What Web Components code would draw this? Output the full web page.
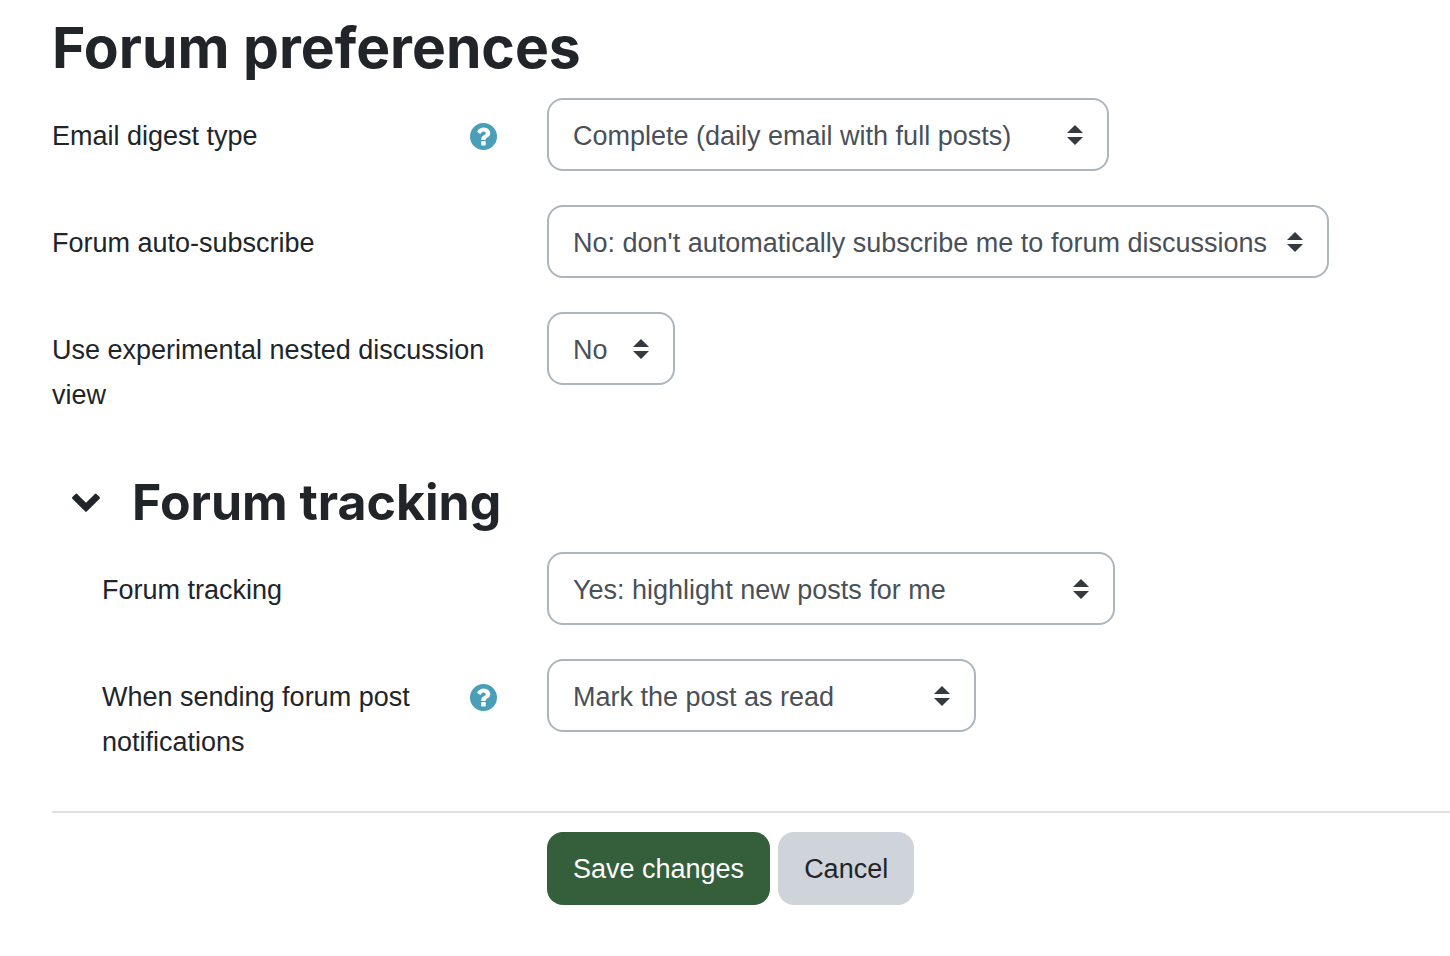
<!DOCTYPE html>
<html lang="en">
<head>
<meta charset="utf-8">
<meta name="viewport" content="width=device-width, initial-scale=1">
<title>Forum preferences</title>
<style>
    body {
        margin: 0;
        background: #fff;
        color: #212529;
        font: 27px/45px "Liberation Sans", Arial, sans-serif;
    }
</style>
</head>
<body>
<preferences-form heading="Forum preferences">
    <pref-select label="Email digest type" help width="562">
        <option>No digest (single email per forum post)</option>
        <option selected>Complete (daily email with full posts)</option>
        <option>Subjects (daily email with subjects only)</option>
    </pref-select>
    <pref-select label="Forum auto-subscribe" width="782">
        <option>Yes: when I post, subscribe me to that forum discussion</option>
        <option selected>No: don't automatically subscribe me to forum discussions</option>
    </pref-select>
    <pref-select label="Use experimental nested discussion view" width="128">
        <option selected>No</option>
        <option>Yes</option>
    </pref-select>
    <pref-section heading="Forum tracking">
        <pref-select label="Forum tracking" width="568">
            <option>No: don't keep track of posts I have seen</option>
            <option selected>Yes: highlight new posts for me</option>
        </pref-select>
        <pref-select label="When sending forum post notifications" help width="429">
            <option selected>Mark the post as read</option>
            <option>Do not mark the post as read</option>
        </pref-select>
    </pref-section>
    <form-button slot="actions" variant="primary">Save changes</form-button>
    <form-button slot="actions">Cancel</form-button>
</preferences-form>

<script>
class HelpButton extends HTMLElement {
    constructor() {
        super();
        this.attachShadow({ mode: 'open' });
        this.shadowRoot.innerHTML = `
            <style>
                :host {
                    display: block;
                    flex: none;
                }

                button {
                    display: flex;
                    align-items: center;
                    height: 45px;
                    padding: 0;
                    border: 0;
                    background: none;
                    color: #499fb8;
                    cursor: pointer;
                }

                svg {
                    width: 27px;
                    height: 27px;
                }
            </style>
            <button type="button" aria-label="Help">
                <svg viewBox="128 128 1536 1536" fill="currentColor" aria-hidden="true">
                    <path fill-rule="evenodd" d="M128 896a768 768 0 1 1 1536 0a768 768 0 1 1-1536 0z M1024 1376v-192q0-14-9-23t-23-9h-192q-14 0-23 9t-9 23v192q0 14 9 23t23 9h192q14 0 23-9t9-23z M1280 704q0-88-55.500-163t-138.500-116-170-41q-243 0-371 213-15 24 8 42l132 100q7 6 19 6 16 0 25-12 53-68 86-92 34-24 86-24 48 0 85.500 26t37.500 59q0 38-20 61t-68 45q-63 28-115.500 86.500t-52.500 125.500v36q0 14 9 23t23 9h192q14 0 23-9t9-23q0-19 21.500-49.500t54.500-49.500q32-18 49-28.500t46-35 44.500-48 28-60.500 12.500-81z"/>
                </svg>
            </button>
        `;
    }
}

class PrefSelect extends HTMLElement {
    constructor() {
        super();
        this.attachShadow({ mode: 'open' });
        this.shadowRoot.innerHTML = `
            <style>
                :host {
                    display: grid;
                    grid-template-columns: var(--label-column) minmax(0, 1fr);
                    margin-bottom: 34px;
                }

                .label {
                    display: flex;
                    align-items: flex-start;
                    justify-content: space-between;
                    box-sizing: border-box;
                    padding: 16px 50px 0 var(--label-indent, 0);
                }

                .control {
                    display: grid;
                    align-items: center;
                    align-self: start;
                    max-width: 100%;
                }

                select, svg {
                    grid-area: 1 / 1;
                }

                select {
                    appearance: none;
                    box-sizing: border-box;
                    width: 100%;
                    height: 73px;
                    margin: 0;
                    padding: 4px 50px 0 24px;
                    border: 2px solid #adb5bd;
                    border-radius: 16px;
                    background: #fff;
                    color: #495057;
                    font: inherit;
                }

                svg {
                    justify-self: end;
                    width: 16px;
                    height: 20px;
                    margin-right: 26px;
                    fill: #343a40;
                    pointer-events: none;
                }
            </style>
            <div class="label">
                <label for="field"></label>
            </div>
            <div class="control">
                <select id="field"></select>
                <svg viewBox="0 0 16 20" aria-hidden="true"><path d="M8 0l8 8H0zM0 12h16l-8 8z"/></svg>
            </div>
        `;
    }

    connectedCallback() {
        const select = this.shadowRoot.querySelector('select');
        this.shadowRoot.querySelector('label').textContent = this.getAttribute('label');
        this.shadowRoot.querySelector('.control').style.width = this.getAttribute('width') + 'px';
        // options can't be slotted into a select, so move them
        select.append(...this.querySelectorAll('option'));

        if (this.hasAttribute('help')) {
            this.shadowRoot.querySelector('.label').append(document.createElement('help-button'));
        }
    }
}

class PrefSection extends HTMLElement {
    constructor() {
        super();
        this.attachShadow({ mode: 'open' });
        this.shadowRoot.innerHTML = `
            <style>
                :host {
                    --label-indent: 50px;
                    display: block;
                    padding-top: 20px;
                }

                .header {
                    display: flex;
                    align-items: center;
                    gap: 32px;
                    margin-bottom: 20px;
                    padding-left: 20px;
                }

                button {
                    display: flex;
                    padding: 0;
                    border: 0;
                    background: none;
                    color: inherit;
                    cursor: pointer;
                }

                button[aria-expanded="false"] svg {
                    transform: rotate(-90deg);
                }

                svg {
                    width: 28px;
                    height: 20px;
                }

                h3 {
                    margin: 0;
                    font: bold 50px/60px Inter, sans-serif;
                }
            </style>
            <div class="header">
                <button type="button" aria-expanded="true" aria-labelledby="heading">
                    <svg viewBox="0 0 28 20" fill="currentColor" aria-hidden="true">
                        <path d="M13.300 19.600L.4 6.700a1.200 1.200 0 0 1 0-1.600L3.500 1.900a1.200 1.200 0 0 1 1.600 0L14 10.800l8.900-8.900a1.200 1.200 0 0 1 1.600 0l3.100 3.200a1.200 1.200 0 0 1 0 1.600L14.700 19.600a1 1 0 0 1-1.400 0z"/>
                    </svg>
                </button>
                <h3 id="heading"></h3>
            </div>
            <div class="content"><slot></slot></div>
        `;

        this.button = this.shadowRoot.querySelector('button');
        this.button.addEventListener('click', () => this.toggle());
    }

    connectedCallback() {
        this.shadowRoot.querySelector('h3').textContent = this.getAttribute('heading');
    }

    toggle() {
        const open = this.button.getAttribute('aria-expanded') === 'true';
        this.button.setAttribute('aria-expanded', String(!open));
        this.shadowRoot.querySelector('.content').hidden = open;
    }
}

class FormButton extends HTMLElement {
    constructor() {
        super();
        this.attachShadow({ mode: 'open' });
        this.shadowRoot.innerHTML = `
            <style>
                :host {
                    display: block;
                }

                button {
                    padding: 15px 26px 13px;
                    border: 0;
                    border-radius: 16px;
                    background: #ced4da;
                    color: inherit;
                    font: inherit;
                    cursor: pointer;
                }

                :host([variant="primary"]) button {
                    background: #355e3b;
                    color: #fff;
                }
            </style>
            <button type="button"><slot></slot></button>
        `;
    }
}

class PreferencesForm extends HTMLElement {
    constructor() {
        super();
        this.attachShadow({ mode: 'open' });
        this.shadowRoot.innerHTML = `
            <style>
                :host {
                    --label-column: 495px;
                    display: block;
                    padding: 12px 0 50px 52px;
                }

                h2 {
                    margin: 0 0 14px;
                    font: bold 57px/72px Inter, sans-serif;
                }

                .actions {
                    display: flex;
                    gap: 8px;
                    margin-top: 46px;
                    padding: 19px 0 0 var(--label-column);
                    border-top: 2px solid #dee2e6;
                }
            </style>
            <h2></h2>
            <slot></slot>
            <div class="actions"><slot name="actions"></slot></div>
        `;
    }

    connectedCallback() {
        this.shadowRoot.querySelector('h2').textContent = this.getAttribute('heading');
    }
}

customElements.define('help-button', HelpButton);
customElements.define('pref-select', PrefSelect);
customElements.define('pref-section', PrefSection);
customElements.define('form-button', FormButton);
customElements.define('preferences-form', PreferencesForm);
</script>
</body>
</html>
